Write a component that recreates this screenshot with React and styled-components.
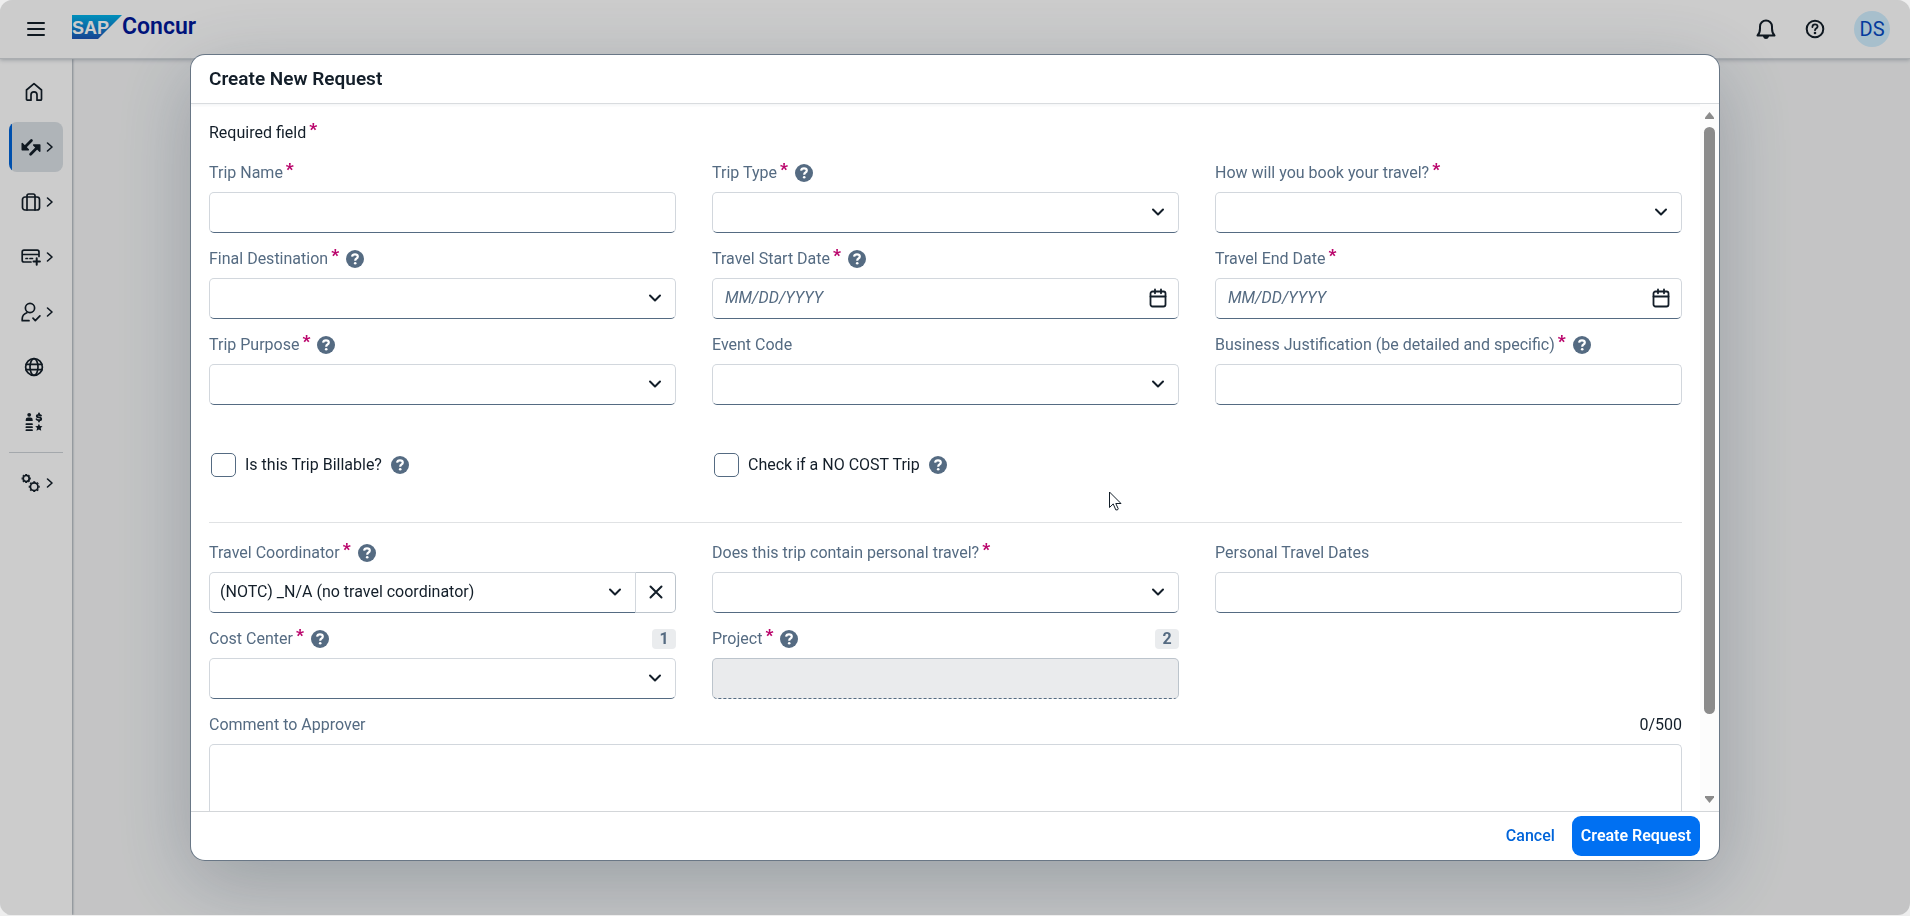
import React, { useId } from "react";
import styled, { createGlobalStyle, css, ThemeProvider } from "styled-components";

const theme = {
   colors: {
      text: "#131e29",
      label: "#556b82",
      border: "#d2d7dd",
      line: "#d9dcdf",
      primary: "#0070f2",
      link: "#0064d9",
      required: "#ba066c",
      disabled: "#eaecee",
      page: "#f5f6f7",
   },
   font: `Roboto, "Liberation Sans", sans-serif`,
};

const GlobalStyle = createGlobalStyle`
   *, *::before, *::after{
      box-sizing: border-box;
   }
   body{
      margin: 0;
      background: #eeeeee;
      color: ${theme.colors.text};
      font-family: ${theme.font};
      font-size: 16px;
      line-height: 24px;
   }
   button, input, select, textarea{
      font: inherit;
      color: inherit;
   }
   svg{
      display: block;
      flex: none;
   }
`

const Page = styled.div`
   display: flex;
   flex-direction: column;
   height: calc(100vh - 1px);
   border-radius: 12px;
   overflow: hidden;
   background: ${({theme})=> theme.colors.page};
`

const TopBar = styled.header`
   display: flex;
   align-items: center;
   flex: none;
   height: 59px;
   padding: 0 20px 0 23px;
   background: #fff;
   border-bottom: 1px solid #d5d9dd;
   box-shadow: 0 1px 4px rgba(34,53,72,.3);
   z-index: 1;
`

const IconButton = styled.button`
   display: flex;
   align-items: center;
   justify-content: center;
   width: 26px;
   height: 36px;
   padding: 0;
   border: 0;
   background: none;
`

const Brand = styled.a`
   display: flex;
   align-items: center;
   margin: 0 auto 5px 23px;
   color: #00189a;
   font-size: 23px;
   font-weight: 600;
   text-decoration: none;
`

const TopActions = styled.div`
   display: flex;
   align-items: center;
   gap: 23px;
`

const Avatar = styled.button`
   width: 36px;
   height: 36px;
   margin-left: 3px;
   padding: 0;
   border: 0;
   border-radius: 50%;
   background: #d1efff;
   color: #064ac4;
   font-size: 20px;
`

const Main = styled.div`
   display: flex;
   flex: 1;
`

const SideNav = styled.nav`
   display: flex;
   flex-direction: column;
   gap: 5px;
   width: 72px;
   padding: 8px 9px;
   background: #fff;
   box-shadow: 1px 0 2px rgba(34,53,72,.4);
`

const NavItem = styled.a`
   display: flex;
   align-items: center;
   gap: 5px;
   height: 50px;
   padding-left: ${({$solo})=> $solo ? 15 : 12}px;
   border-radius: 8px;
   color: ${({theme})=> theme.colors.text};
   background: ${({$active})=> $active ? "linear-gradient(90deg, #0064d9 3px, #dbe1e6 3px)" : "none"};
`

const NavLine = styled.hr`
   width: 100%;
   margin: 0;
   border: 0;
   border-top: 1px solid #ced3d8;
`

const Overlay = styled.div`
   position: fixed;
   inset: 0 0 1px;
   z-index: 2;
   display: flex;
   align-items: center;
   justify-content: center;
   border-radius: 12px;
   background: rgba(0,0,0,.2);
   overflow: hidden;
`

const Dialog = styled.form`
   display: flex;
   flex-direction: column;
   width: 80%;
   height: 88%;
   border-radius: 14px;
   background: #fff;
   box-shadow: 0 0 0 1px #697786, 0 20px 80px rgba(34,53,72,.28);
`

const DialogHeader = styled.header`
   flex: none;
   padding: 12px 18px;
   border-bottom: 1px solid ${({theme})=> theme.colors.line};
   box-shadow: 0 2px 2px rgba(34,53,72,.04);
`

const Title = styled.h1`
   margin: 0;
   font-size: 19px;
   line-height: 24px;
   font-weight: 600;
`

const DialogBody = styled.div`
   display: flex;
   flex: 1;
   min-height: 0;
`

const Scroller = styled.div`
   flex: 1;
   padding: 17px 18px 0;
   overflow-y: auto;
   scrollbar-width: none;
`

const ScrollBar = styled.div`
   display: flex;
   flex-direction: column;
   align-items: center;
   width: 19px;
   padding: 8px 0;
   background: #fcfcfc;
   color: #8b8b8b;
`

const Thumb = styled.div`
   width: 11px;
   height: 85%;
   margin: 8px 0 auto;
   border-radius: 6px;
   background: #8b8b8b;
`

const Grid = styled.div`
   display: grid;
   grid-template-columns: repeat(3, 1fr);
   gap: 14px 36px;
`

const LabelRow = styled.div`
   display: flex;
   align-items: center;
   gap: 7px;
   height: 24px;
   margin-bottom: 7px;
`

const Label = styled.label`
   color: ${({theme})=> theme.colors.label};
`

const Note = styled.p`
   margin: 0 0 16px;
`

const Star = styled.span`
   margin-left: 3px;
   color: ${({theme})=> theme.colors.required};
   font-size: 17px;
   line-height: 16px;
   font-weight: 900;
   vertical-align: 3px;
`

const HelpButton = styled.button`
   padding: 0;
   border: 0;
   background: none;
   color: ${({theme})=> theme.colors.label};
`

const Badge = styled.span`
   width: 24px;
   margin-left: auto;
   border-radius: 4px;
   background: ${({theme})=> theme.colors.disabled};
   color: ${({theme})=> theme.colors.label};
   font-weight: 700;
   line-height: 20px;
   text-align: center;
`

const box = css`
   width: 100%;
   height: 41px;
   border: 1px solid ${({theme})=> theme.colors.border};
   border-bottom-color: ${({theme})=> theme.colors.label};
   border-radius: 5px;
   background: #fff;
`

const Input = styled.input`
   ${box}
   padding: 0 12px;
   &:disabled{
      border-color: #bcc4cc;
      border-bottom: 1px dashed ${({theme})=> theme.colors.label};
      background: #eaebed;
   }
`

const SelectBox = styled.div`
   display: grid;
   flex: 1;
   align-items: center;
   > *{
      grid-area: 1 / 1;
   }
   > svg{
      justify-self: end;
      margin-right: 14px;
      pointer-events: none;
   }
`

const Select = styled.select`
   ${box}
   padding: 0 40px 0 10px;
   appearance: none;
   ${({$joined})=> $joined && "border-radius: 5px 0 0 5px;"}
`

const DateBox = styled.div`
   ${box}
   display: flex;
   align-items: center;
   padding-right: 7px;
   input{
      flex: 1;
      min-width: 0;
      padding: 0 12px;
      border: 0;
      background: none;
   }
   input::placeholder{
      color: ${({theme})=> theme.colors.label};
      font-style: italic;
      opacity: 1;
   }
`

const Joined = styled.div`
   display: flex;
`

const ClearButton = styled.button`
   display: flex;
   align-items: center;
   justify-content: center;
   width: 40px;
   padding: 0;
   border: 1px solid #bcc4cc;
   border-left: 0;
   border-radius: 0 5px 5px 0;
   background: #fff;
`

const CheckGrid = styled(Grid)`
   margin: 48px 0 45px;
`

const Check = styled.div`
   display: flex;
   align-items: center;
   gap: 9px;
   height: 24px;
   padding-left: 2px;
   input{
      width: 25px;
      height: 24px;
      margin: 0;
      appearance: none;
      border: 1px solid ${({theme})=> theme.colors.label};
      border-radius: 5px;
   }
`

const Divider = styled.hr`
   margin: 0 0 18px;
   border: 0;
   border-top: 1px solid #e0e2e4;
`

const Comment = styled.div`
   margin-top: 14px;
`

const Count = styled.span`
   margin-left: auto;
`

const TextArea = styled.textarea`
   ${box}
   display: block;
   height: 106px;
   padding: 8px 12px;
   resize: none;
`

const DialogFooter = styled.footer`
   display: flex;
   align-items: center;
   justify-content: flex-end;
   gap: 7px;
   flex: none;
   height: 49px;
   padding: 0 19px;
   border-top: 1px solid #d3d6d9;
`

const Button = styled.button`
   height: 40px;
   padding: 0 ${({$primary})=> $primary ? 9 : 10}px;
   border: 0;
   border-radius: 9px;
   background: ${({$primary, theme})=> $primary ? theme.colors.primary : "none"};
   color: ${({$primary, theme})=> $primary ? "#fff" : theme.colors.link};
   font-weight: ${({$primary})=> $primary ? 600 : 500};
`

const Pointer = styled.svg`
   position: absolute;
   left: 1109px;
   top: 491px;
   pointer-events: none;
`

// line icons share a 20x20 box
function Icon({children, size = 20, stroke = 2}){
   return (
     <svg width={size} height={size} viewBox="0 0 20 20" fill="none" stroke="currentColor" strokeWidth={stroke} strokeLinecap="round" strokeLinejoin="round" aria-hidden="true">
       {children}
     </svg>
   )
}

const icons = {
   home: <path d="M2.5 17.2V8L10 1.6 17.5 8v9.2q0 1-1 1H13v-5.4a3 3 0 0 0-6 0v5.4H3.500q-1 0-1-1z" />,
   request: (
      <>
         <path d="M1.200 6.600v6.200h6.200z M18.800 8v6.200L12.600 8z" fill="currentColor" strokeWidth="1.400" />
         <path d="M4.500 9.500 10.400 3.600M15.500 11.300 9.600 17.200" strokeWidth="2.800" />
      </>
   ),
   bag: (
      <>
        <rect x="1.500" y="5" width="17" height="13" rx="2.500" />
        <path d="M6 18V3.800Q6 2 7.800 2h4.400Q14 2 14 3.800V18" />
      </>
   ),
   card: (
      <>
        <path d="M18 9.500V5q0-1.800-1.800-1.800H3Q1.200 3.200 1.200 5v8.200q0 1.800 1.800 1.800H10M1.500 7.500h16M5 11.500h1.500M9 11.500h2.500" />
        <path d="M15.700 11.300v6.400M12.500 14.500h6.400" strokeWidth="2" />
      </>
   ),
   person: (
      <>
        <circle cx="9" cy="6" r="4.600" />
        <path d="M8 18.700H1.200V17q0-4.500 4.600-6.200M12 16.200l2.300 2.400 4.600-4.800" />
      </>
   ),
   globe: (
      <>
        <circle cx="10" cy="10" r="8.400" />
        <ellipse cx="10" cy="10" rx="4" ry="8.400" />
        <path d="M2 7.300h16M2 12.700h16" />
      </>
   ),
   budget: (
      <>
        <circle cx="5.200" cy="2.800" r="1.900" fill="currentColor" stroke="none" />
        <path d="M1.700 9V7.800Q1.700 5.400 4 5.400h2.400q2.300 0 2.300 2.400V9zM14.900 11.800l1.100 2.200 2.500.3-1.800 1.800.5 2.600-2.300-1.300-2.400 1.300.6-2.600-1.900-1.800 2.600-.3z" fill="currentColor" stroke="none" />
        <path d="M2.400 12.200H8M2.400 15.200H8M2.400 18.200H8M17 3.600q-.6-.8-2.200-.8-2 0-2 1.300t2.200 1.300q2.200.2 2.200 1.500T15 8.200q-1.800 0-2.500-.9M15 1.300v1.500M15 8.200v1.300" strokeWidth="1.800" />
      </>
   ),
   gears: (
      <>
        <circle cx="5.200" cy="5.500" r="3" />
        <circle cx="13.200" cy="13.700" r="3.800" />
        <path d="M5.200.9v1.100M5.200 9v1.100M.6 5.500h1.100M8.700 5.500h1.100M2 2.300l.7.700M7.700 8l.7.700M7.700 3l.7-.7M2 8.700l.7-.7M13.200 8.200v1.100M13.200 18v1.100M7.700 13.700h1.200M17.500 13.700h1.200M9.300 9.800l.8.800M16.300 16.800l.8.800M16.300 10.600l.8-.8M9.300 17.600l.8-.8" strokeWidth="2" strokeLinecap="butt" />
      </>
   ),
};

function Chevron(){
   return (
     <svg width="14" height="14" viewBox="0 0 14 14" fill="none" stroke="#131e29" strokeWidth="2" strokeLinecap="round" strokeLinejoin="round" aria-hidden="true">
       <path d="M2 4.500l5 5 5-5" />
     </svg>
   )
}

function Help(){
   return (
     <HelpButton type="button" aria-label="Help">
       <svg width="18" height="18" viewBox="0 0 18 18">
         <circle cx="9" cy="9" r="9" fill="currentColor" />
         <path d="M6.100 6.700Q6.300 4.300 9 4.300t2.800 2.200q0 1.300-1.300 2T9.200 10.700" fill="none" stroke="#fff" strokeWidth="2.200" />
         <circle cx="9.200" cy="13.300" r="1.300" fill="#fff" />
       </svg>
     </HelpButton>
   )
}

function Nav({icon, label, active, more}){
   return (
     <NavItem href="#" aria-label={label} $active={active} $solo={!more}>
       <Icon stroke={1.7}>{icons[icon]}</Icon>
       {more && (
         <svg width="8" height="12" viewBox="0 0 8 12" fill="none" stroke="currentColor" strokeWidth="1.600" strokeLinecap="round" strokeLinejoin="round">
           <path d="M1.500 2l4.500 4-4.500 4" />
         </svg>
       )}
     </NavItem>
   )
}

function Control({type, id, value}){
   if(type === "select"){
      return (
        <SelectBox>
          <Select id={id} />
          <Chevron />
        </SelectBox>
      )
   }
   if(type === "clearable"){
      return (
        <Joined>
          <SelectBox>
            <Select id={id} $joined>
              <option>{value}</option>
            </Select>
            <Chevron />
          </SelectBox>
          <ClearButton type="button" aria-label="Clear">
            <svg width="14" height="14" viewBox="0 0 14 14" stroke="#131e29" strokeWidth="2" strokeLinecap="round">
              <path d="M1.500 1.500l11 11M12.500 1.500l-11 11" />
            </svg>
          </ClearButton>
        </Joined>
      )
   }
   if(type === "date"){
      return (
        <DateBox>
          <input id={id} type="text" placeholder="MM/DD/YYYY" />
          <IconButton type="button" aria-label="Open calendar">
            <svg width="18" height="20" viewBox="0 0 18 20" fill="none" stroke="#131e29" strokeWidth="1.800" strokeLinecap="round" strokeLinejoin="round">
              <rect x="1.500" y="3.500" width="15" height="15" rx="2" />
              <path d="M1.500 8.500h15M6 1.500v3.800M12 1.500v3.800" />
            </svg>
          </IconButton>
        </DateBox>
      )
   }
   return <Input id={id} type="text" disabled={type === "disabled"} />
}

function Field({label, type, required, help, badge, value}){
   const id = useId();
   return (
     <div>
       <LabelRow>
         <Label htmlFor={id}>{label}{required && <Star>*</Star>}</Label>
         {help && <Help />}
         {badge && <Badge>{badge}</Badge>}
       </LabelRow>
       <Control type={type} id={id} value={value} />
     </div>
   )
}

function CheckField({label}){
   const id = useId();
   return (
     <Check>
       <input id={id} type="checkbox" />
       <label htmlFor={id}>{label}</label>
       <Help />
     </Check>
   )
}

export default function App(){
   return (
     <ThemeProvider theme={theme}>
       <GlobalStyle />
       <Page>
         <TopBar>
           <IconButton aria-label="Menu">
             <svg width="18" height="14" viewBox="0 0 18 14" stroke="#131e29" strokeWidth="2" strokeLinecap="round">
               <path d="M1 1h16M1 7h16M1 13h16" />
             </svg>
           </IconButton>
           <Brand href="#">
             <svg width="50" height="24" viewBox="0 0 50 24">
               <defs>
                 <linearGradient id="sap" x1="0" y1="0" x2="0" y2="1">
                   <stop offset="0" stopColor="#00b4ea" />
                   <stop offset="1" stopColor="#1d56b8" />
                 </linearGradient>
               </defs>
               <path d="M0 0h50L26 24H0z" fill="url(#sap)" />
               <text x="0" y="19" fill="#fff" fontFamily="Liberation Sans" fontWeight="700" fontSize="18">SAP</text>
             </svg>
             Concur
           </Brand>
           <TopActions>
             <IconButton aria-label="Notifications">
               <Icon>
                 <path d="M1.500 16.500Q4 14 4 9.500V7.500a6 6 0 0 1 12 0v2q0 4.500 2.500 7z" />
                 <path d="M8 17.500h4q-.5 1.500-2 1.500t-2-1.500z" fill="currentColor" />
               </Icon>
             </IconButton>
             <IconButton aria-label="Help">
               <Icon>
                 <circle cx="10" cy="10" r="8.300" />
                 <path d="M7.400 8q.1-2.600 2.600-2.600T12.600 7.500q0 1.200-1.300 1.900T10 11.200" strokeWidth="1.800" />
                 <circle cx="10" cy="14" r="1.300" fill="currentColor" stroke="none" />
               </Icon>
             </IconButton>
             <Avatar>DS</Avatar>
           </TopActions>
         </TopBar>
         <Main>
           <SideNav>
             <Nav icon="home" label="Home" />
             <Nav icon="request" label="Requests" active more />
             <Nav icon="bag" label="Travel" more />
             <Nav icon="card" label="Expense" more />
             <Nav icon="person" label="Approvals" more />
             <Nav icon="globe" label="App Center" />
             <Nav icon="budget" label="Budget" />
             <NavLine />
             <Nav icon="gears" label="Administration" more />
           </SideNav>
         </Main>
       </Page>
       <Overlay>
         <Dialog role="dialog" aria-labelledby="dialog-title">
           <DialogHeader>
             <Title id="dialog-title">Create New Request</Title>
           </DialogHeader>
           <DialogBody>
             <Scroller>
               <Note>Required field<Star>*</Star></Note>
               <Grid>
                 <Field label="Trip Name" required />
                 <Field label="Trip Type" type="select" required help />
                 <Field label="How will you book your travel?" type="select" required />
                 <Field label="Final Destination" type="select" required help />
                 <Field label="Travel Start Date" type="date" required help />
                 <Field label="Travel End Date" type="date" required />
                 <Field label="Trip Purpose" type="select" required help />
                 <Field label="Event Code" type="select" />
                 <Field label="Business Justification (be detailed and specific)" required help />
               </Grid>
               <CheckGrid>
                 <CheckField label="Is this Trip Billable?" />
                 <CheckField label="Check if a NO COST Trip" />
               </CheckGrid>
               <Divider />
               <Grid>
                 <Field label="Travel Coordinator" type="clearable" value="(NOTC) _N/A (no travel coordinator)" required help />
                 <Field label="Does this trip contain personal travel?" type="select" required />
                 <Field label="Personal Travel Dates" />
                 <Field label="Cost Center" type="select" required help badge="1" />
                 <Field label="Project" type="disabled" required help badge="2" />
               </Grid>
               <Comment>
                 <LabelRow>
                   <Label htmlFor="comment">Comment to Approver</Label>
                   <Count>0/500</Count>
                 </LabelRow>
                 <TextArea id="comment" />
               </Comment>
             </Scroller>
             <ScrollBar aria-hidden="true">
               <svg width="9" height="7" viewBox="0 0 9 7"><path d="M4.500 0 9 5.500V7H0V5.500z" fill="currentColor" /></svg>
               <Thumb />
               <svg width="9" height="7" viewBox="0 0 9 7"><path d="M4.500 7 9 1.500V0H0V1.500z" fill="currentColor" /></svg>
             </ScrollBar>
           </DialogBody>
           <DialogFooter>
             <Button type="button">Cancel</Button>
             <Button type="button" $primary>Create Request</Button>
           </DialogFooter>
         </Dialog>
         <Pointer width="13" height="20" viewBox="0 0 13 20">
           <path d="M.5 1v15.500l3.700-3.600 2.600 6h1.700l.7-1.200-2.400-5.200H12z" fill="#fff" stroke="#131e29" />
         </Pointer>
       </Overlay>
     </ThemeProvider>
   )
}
